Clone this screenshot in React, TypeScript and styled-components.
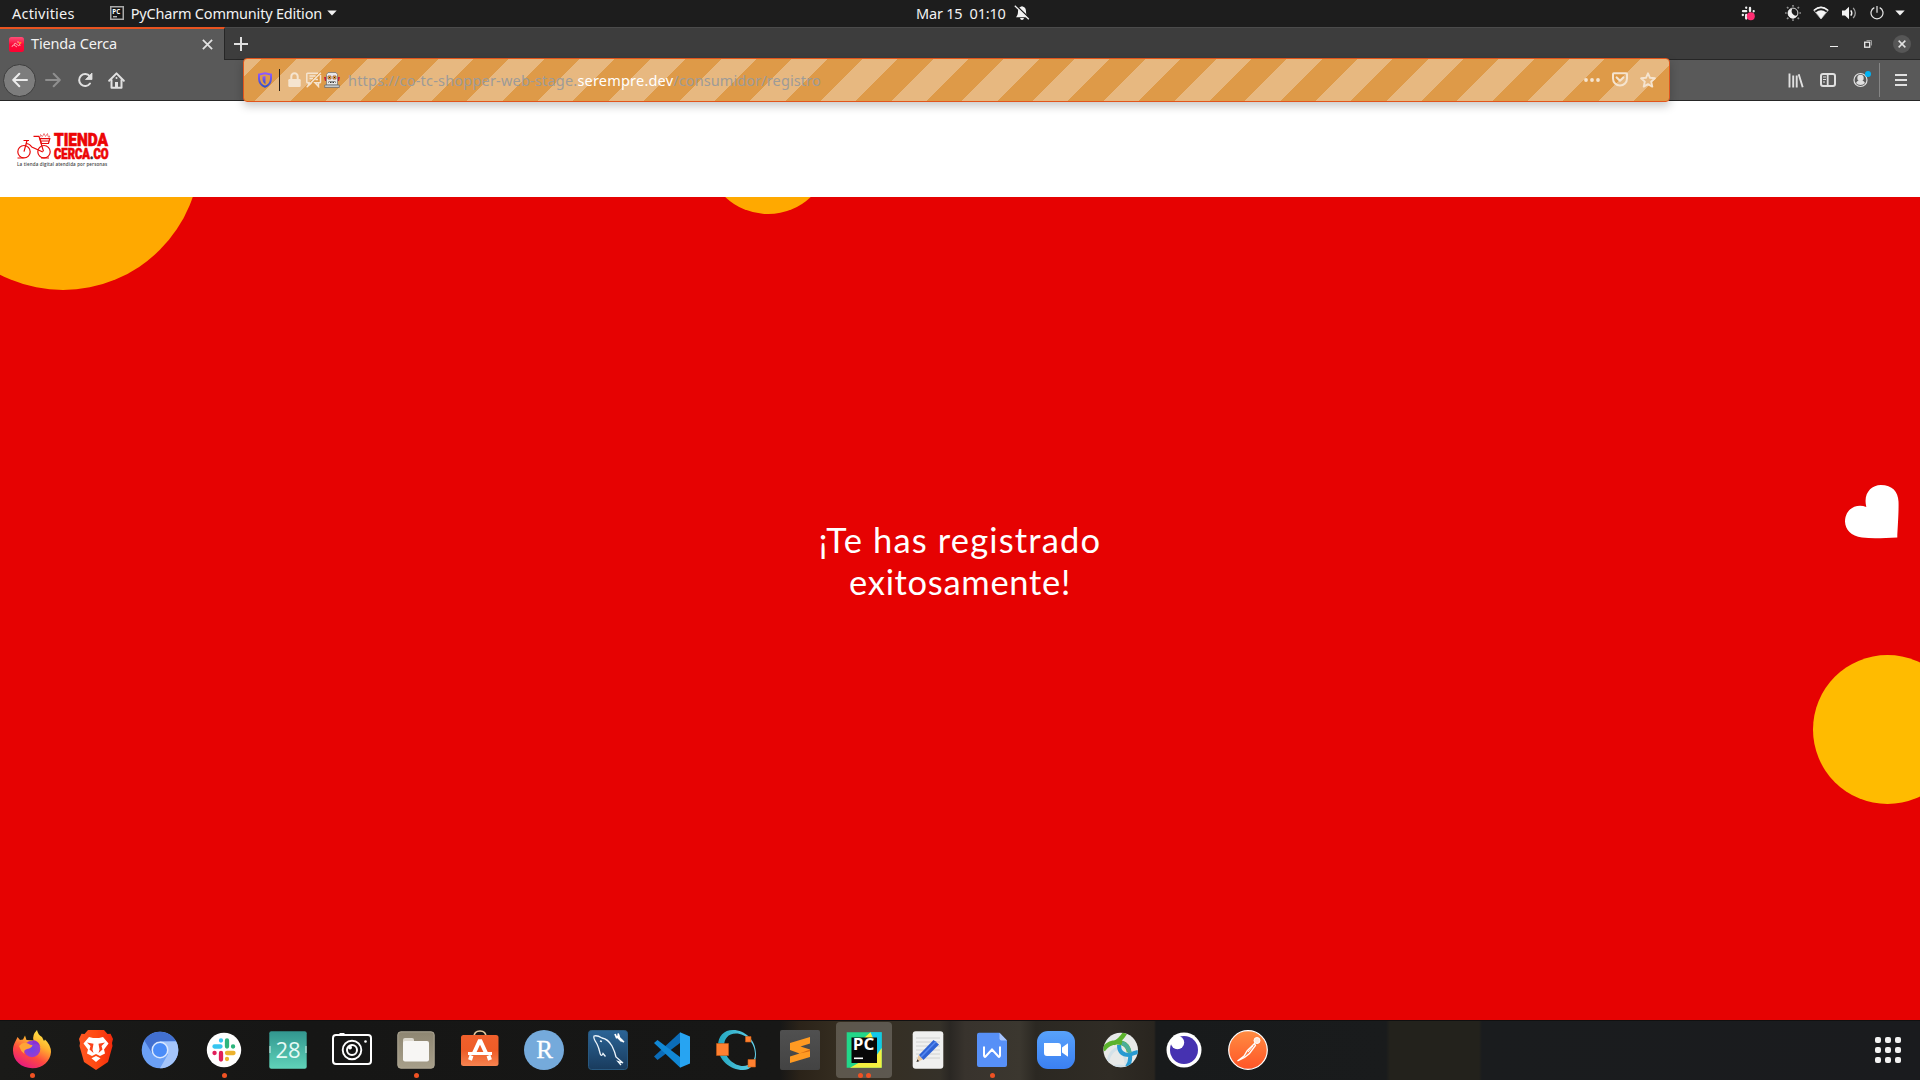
import React from "react";
import styled, { createGlobalStyle } from "styled-components";

const GlobalStyle = createGlobalStyle`
  * { box-sizing: border-box; }
  body { margin: 0; background: #e60202; overflow: hidden; }
  svg { display: block; flex: none; }
`;

const ui = `"Noto Sans", "Open Sans", sans-serif`;

const Desktop = styled.div`
  width: 1920px;
  height: 1080px;
  display: flex;
  flex-direction: column;
  overflow: hidden;
  font-family: ${ui};
`;

const Label = styled.span<{ $size?: number; $spacing?: number; $color?: string; $lift?: number }>`
  font-size: ${(p) => p.$size ?? 14.5}px;
  letter-spacing: ${(p) => p.$spacing ?? 0}px;
  color: ${(p) => p.$color ?? "#f2f2f2"};
  white-space: pre;
  line-height: 20px;
  margin-bottom: ${(p) => p.$lift ?? 1}px;
`;

const Gap = styled.div<{ $w: number }>`
  flex: none;
  width: ${(p) => p.$w}px;
`;

const Spacer = styled.div`
  flex: 1;
`;

const TopBar = styled.header`
  height: 27px;
  padding-bottom: 1px;
  flex: none;
  background: #1d1d1d;
  display: grid;
  grid-template-columns: 916px 1fr 180px;
`;

const BarGroup = styled.div`
  display: flex;
  align-items: center;
`;

const TabStrip = styled.div`
  height: 33px;
  flex: none;
  display: flex;
  align-items: center;
  background: #3d3d3d;
  border-top: 1px solid #4b4b4b;
  border-bottom: 1px solid #262626;
`;

const Tab = styled.div`
  width: 225px;
  height: 33px;
  margin-top: -1px;
  margin-bottom: -1px;
  padding: 0 11px 1px 9px;
  flex: none;
  display: flex;
  align-items: center;
  background: #595959;
  border-top: 2px solid #e95420;
  border-right: 1px solid #262626;
`;

const WindowClose = styled.div`
  width: 18px;
  height: 18px;
  border-radius: 50%;
  background: #565656;
  display: grid;
  place-items: center;
`;

const NavBar = styled.div`
  height: 41px;
  flex: none;
  display: flex;
  align-items: center;
  background: #595959;
  border-bottom: 1px solid #262626;
`;

const BackButton = styled.div`
  width: 33px;
  height: 33px;
  margin-left: 3px;
  border: 1px solid #3e3e3e;
  border-radius: 50%;
  background: #7d7d7d;
  display: grid;
  place-items: center;
`;

const UrlBar = styled.div`
  width: 1427px;
  height: 44px;
  margin: -3px 0 -2px;
  padding-left: 14px;
  flex: none;
  z-index: 2;
  display: flex;
  align-items: center;
  border: 1px solid #e2551c;
  border-radius: 4px;
  background: repeating-linear-gradient(-45deg, #de9a48 0 25px, #e7b880 25px 50px);
  box-shadow: 0 4px 10px rgba(0, 0, 0, 0.22);
`;

const Rule = styled.div<{ $h: number; $color: string }>`
  width: 1px;
  height: ${(p) => p.$h}px;
  background: ${(p) => p.$color};
`;

const SiteHeader = styled.div`
  height: 96px;
  flex: none;
  background: #fff;
  display: flex;
  padding: 29px 0 0 16px;
`;

const Page = styled.main`
  position: relative;
  height: 823px;
  flex: none;
  overflow: hidden;
  background: #e60202;
  display: flex;
  justify-content: center;
`;

const Bubble = styled.div<{ $x: number; $y: number; $r: number; $color: string }>`
  position: absolute;
  left: ${(p) => p.$x - p.$r}px;
  top: ${(p) => p.$y - p.$r}px;
  width: ${(p) => p.$r * 2}px;
  height: ${(p) => p.$r * 2}px;
  border-radius: 50%;
  background: ${(p) => p.$color};
`;

const HeartSpot = styled.div`
  position: absolute;
  left: 1844px;
  top: 288px;
`;

const Message = styled.h1`
  margin: 322px 0 0;
  font-family: Lato, "Noto Sans", sans-serif;
  font-weight: 400;
  font-size: 34.5px;
  line-height: 42px;
  color: #fff;
  text-align: center;
`;

const Line = styled.span<{ $spacing: number }>`
  display: block;
  letter-spacing: ${(p) => p.$spacing}px;
`;

const Dock = styled.footer`
  height: 60px;
  flex: none;
  display: flex;
  border-top: 1px solid #111;
  background: linear-gradient(90deg,
    #1a1a18 0, #161615 300px, #171716 780px, #2b2319 800px, #352d20 840px, #353129 940px,
    #2a2723 950px, #38332d 965px, #3b372f 1020px, #2b2822 1036px, #302c25 1110px, #29251f 1154px,
    #181a1b 1156px, #191b1c 1386px, #23221c 1390px, #23221c 1479px, #1a1c1e 1482px, #1a1b1e 1920px);
`;

const DockItem = styled.div<{ $active?: boolean }>`
  width: 56px;
  height: 56px;
  margin: 1px 4px 0;
  flex: none;
  display: flex;
  flex-direction: column;
  align-items: center;
  padding-top: 8px;
  border-radius: 4px;
  background: ${(p) => (p.$active ? "rgba(255,255,255,0.2)" : "transparent")};
`;

const Dots = styled.div`
  display: flex;
  gap: 3px;
  margin-top: 2.5px;
`;

const Dot = styled.i`
  width: 5px;
  height: 5px;
  border-radius: 50%;
  background: #f05223;
`;

const AppGrid = styled.div`
  display: grid;
  grid-template-columns: repeat(3, 6px);
  grid-auto-rows: 6px;
  gap: 4px;
  margin: 16px 19px 0 0;
`;

const GridDot = styled.i`
  border-radius: 2px;
  background: #f2f2f2;
`;

const LogoRow = styled.div`
  display: flex;
  flex-direction: column;
  align-items: flex-start;
`;

const LogoTop = styled.div`
  display: flex;
  height: 31px;
`;

const LogoWords = styled.div`
  padding-top: 2px;
  margin-left: 2px;
  font-family: Roboto, sans-serif;
  font-weight: 900;
  color: #ec0505;
  -webkit-text-stroke: 0.7px #ec0505;
`;

const LogoWord = styled.div<{ $size: number; $scale: number; $height: number }>`
  font-size: ${(p) => p.$size}px;
  line-height: ${(p) => p.$height}px;
  height: ${(p) => p.$height}px;
  width: max-content;
  white-space: nowrap;
  transform: scaleX(${(p) => p.$scale});
  transform-origin: 0 50%;
`;

const DarkDot = styled.span`
  color: #333;
  -webkit-text-stroke-color: #333;
`;

const LogoTag = styled.div`
  margin-left: 1px;
  font-family: "Open Sans", sans-serif;
  font-weight: 600;
  font-size: 4.5px;
  letter-spacing: 0.14px;
  line-height: 6px;
  white-space: nowrap;
  color: #444;
`;

const S = "#e0e0e0";

const PyCharmMini = () => (
  <svg width="14" height="14" viewBox="0 0 14 14">
    <rect width="14" height="14" fill="#aaa" />
    <rect x="1.5" y="1.5" width="11" height="11" fill="#161616" />
    <text x="2.3" y="7.6" fontSize="6.3" fontWeight="700" fontFamily="Open Sans, sans-serif" fill="#fff">PC</text>
    <path d="M3 10.8h4" stroke="#fff" />
  </svg>
);

const Caret = () => (
  <svg width="10" height="6" viewBox="0 0 10 6"><path d="M.3.5h9.4L5 5.5z" fill="#f2f2f2" /></svg>
);

const BellOff = () => (
  <svg width="16" height="16" viewBox="0 0 16 16">
    <path d="M8 1.2c-3 .5-4 2.6-4 5.3 0 2.7-.6 4.2-2 5.7h12c-1.4-1.5-2-3-2-5.7 0-2.7-1-4.8-4-5.3zM6 13h4q-.4 2-2 2t-2-2z" fill="#f2f2f2" />
    <path d="M1.8.2l14 13.5" stroke="#1d1d1d" strokeWidth="1.5" />
    <path d="M.8.8l14 13.5" stroke="#f2f2f2" strokeWidth="1.3" />
  </svg>
);

const SlackTray = () => (
  <svg width="15" height="15" viewBox="0 0 15 15">
    <g stroke="#f0f0f0" strokeWidth="2.3" strokeLinecap="round">
      <path d="M5.2 1.7v.1M5.2 5.2H2M9 2v3M12.7 5.2v.1M1.8 9h.1M5.2 9v3.5" />
    </g>
    <circle cx="9.8" cy="10.3" r="4" fill="#ff2d72" />
  </svg>
);

const NightLight = () => (
  <svg width="16" height="16" viewBox="0 0 16 16">
    <g stroke="#8f8f8f" strokeWidth="1.6"><path d="M8 0v1.7M8 14.3V16M0 8h1.7M14.3 8H16M2 2l1.4 1.4M12.6 12.6L14 14M14 2l-1.4 1.4M3.4 12.6L2 14" /></g>
    <circle cx="8" cy="8" r="4.9" fill="none" stroke="#f2f2f2" strokeWidth=".9" />
    <path d="M4.600 4.600A5 5 0 1 0 12.500 10.300 4.300 4.300 0 0 1 7.200 4.200q-1.300-.6-2.600.4z" fill="#f2f2f2" />
  </svg>
);

const Wifi = () => (
  <svg width="16" height="14" viewBox="0 0 16 14">
    <path d="M.7 4.3Q8-2 15.300 4.300L8 13z" fill="none" stroke="#aaa" strokeWidth=".9" />
    <path d="M2.800 6.200Q8 2.300 13.200 6.200L8 13z" fill="#f5f5f5" /><path d="M1 4.300Q8-1.500 15 4.300" fill="none" stroke="#f2f2f2" strokeWidth="1.5" />
  </svg>
);

const Volume = () => (
  <svg width="15" height="14" viewBox="0 0 15 14">
    <path d="M0 4.500h3L7 .7v12.600L3 9.500H0z" fill="#f2f2f2" />
    <path d="M8.800 4.300q2 2.700 0 5.400" fill="none" stroke="#f2f2f2" strokeWidth="1.4" />
    <path d="M11.200 1.800q4.200 5.200 0 10.400" fill="none" stroke="#a0a0a0" strokeWidth="1.3" />
  </svg>
);

const Power = () => (
  <svg width="14" height="14" viewBox="0 0 14 14" fill="none" stroke="#e8e8e8" strokeWidth="1.2">
    <path d="M4.300 1.600a6 6 0 1 0 5.400 0M7 0v6.700" />
  </svg>
);

const Favicon = () => (
  <svg width="15" height="15" viewBox="0 0 15 15">
    <defs><linearGradient id="fav" x2="0" y2="1"><stop stopColor="#ff4f78" /><stop offset=".5" stopColor="#fa0c3a" /><stop offset="1" stopColor="#ff0030" /></linearGradient></defs>
    <rect width="15" height="15" rx="2.5" fill="url(#fav)" />
    <path d="M3 10q0-2 2-2l3 2M5 8l1-2 4 3M8 5h2l1 4" stroke="#ffb0b5" fill="none" strokeWidth=".9" />
    <path d="M9.500 5h3l-.5 2h-2z" fill="#ff8a23" />
  </svg>
);

const Cross = ({ size = 10, w = 1.6 }: { size?: number; w?: number }) => (
  <svg width={size} height={size} viewBox="0 0 10 10" stroke="#e2e2e2" strokeWidth={w}><path d="M.8.8l8.4 8.4M9.2.8L.8 9.2" /></svg>
);

const Plus = () => (
  <svg width="14" height="14" viewBox="0 0 14 14" stroke={S} strokeWidth="2"><path d="M7 0v14M0 7h14" /></svg>
);

const Arrow = ({ dir, color }: { dir: "left" | "right"; color: string }) => (
  <svg width="16" height="16" viewBox="0 0 16 16" fill="none" stroke={color} strokeWidth="2" strokeLinecap="round" strokeLinejoin="round">
    {dir === "left" ? <path d="M15 8H1.500M7.300 1.800L1.200 8l6.100 6.200" /> : <path d="M1 8h13.500M8.700 1.800L14.800 8l-6.100 6.200" />}
  </svg>
);

const Reload = () => (
  <svg width="16" height="16" viewBox="0 0 16 16">
    <path d="M13 11.500A6 6 0 1 1 12.800 4.200" fill="none" stroke={S} strokeWidth="2" strokeLinecap="round" />
    <path d="M15 1v6.500H8.500z" fill={S} stroke={S} strokeWidth=".8" strokeLinejoin="round" />
  </svg>
);

const Home = () => (
  <svg width="17" height="17" viewBox="0 0 17 17" fill="none" stroke={S} strokeWidth="2" strokeLinejoin="round" strokeLinecap="round">
    <path d="M1.200 8.700l7.300-7.300 7.300 7.300" /><path d="M3.500 8v7.700h10V8" /><path d="M8.500 15v-5" strokeWidth="3" strokeLinecap="butt" /><path d="M8.500 6h.01" />
  </svg>
);

const Shield = () => (
  <svg width="14" height="16" viewBox="0 0 14 16">
    <defs><linearGradient id="sh" x2="0" y2="1"><stop stopColor="#9059ff" /><stop offset="1" stopColor="#3352c8" /></linearGradient></defs>
    <path d="M7 1.200L13 2.500v4.300Q12.700 12.700 7 14.800 1.300 12.700 1 6.800V2.500z" fill="none" stroke="url(#sh)" strokeWidth="2" />
    <path d="M7.500 4v8Q4.500 10.500 4.500 7V4.500z" fill="url(#sh)" />
  </svg>
);

const W = "#f5e4cf";
const Lock = () => (
  <svg width="13" height="16" viewBox="0 0 13 16">
    <path d="M3.300 8V4.500a3.200 3.200 0 0 1 6.400 0V8" fill="none" stroke={W} strokeWidth="2" /><rect x=".3" y="7" width="12.4" height="8" rx="1.2" fill={W} />
  </svg>
);

const ChatOff = () => (
  <svg width="16" height="16" viewBox="0 0 16 16" fill="none" stroke={W} strokeWidth="1.5">
    <path d="M12 1.200H1.500q-.7 0-.7.800v8q0 .8.700.8H3L2 14l3.500-3M14.500 3v7q0 .8-.8.800H9l3.500 3.700v-3.500M3.500 4h6M3.500 6.500H7M.8 15L14.800.8M9.500 7.500H12" />
  </svg>
);

const Robot = () => (
  <svg width="16" height="16" viewBox="0 0 16 16">
    <path d="M0 5h2v4H1zM14 5h2l-1 4h-1z" fill="#c81e35" />
    <path d="M4 .5h8l1.500 2V13h-11V2.500z" fill="#e9e9e9" stroke="#777" strokeWidth=".8" />
    <path d="M4 4h3v3H4zM9 4h3v3H9z" fill="#f6d84e" stroke="#943c25" strokeWidth=".7" />
    <path d="M5 5h1v1H5zM10 5h1v1h-1z" fill="#461010" />
    <path d="M4.500 9.500h7V11h-7z" fill="#333" /><path d="M5 10h1v1H5zM7.500 10h1v1h-1zM10 10h1v1h-1z" fill="#eee" />
    <path d="M.7 13h14.600v2.500H.7z" fill="#c3c9cd" stroke="#666" strokeWidth=".7" />
  </svg>
);

const Ellipsis = () => (
  <svg width="16" height="4" viewBox="0 0 16 4" fill={W}><circle cx="2" cy="2" r="1.9" /><circle cx="8" cy="2" r="1.9" /><circle cx="14" cy="2" r="1.9" /></svg>
);

const Pocket = () => (
  <svg width="16" height="15" viewBox="0 0 16 15" fill="none" stroke={W} strokeWidth="2" strokeLinecap="round" strokeLinejoin="round">
    <path d="M1.800 1.200h12.400q.8 0 .8.800v4.500a7 7 0 0 1-14 0V2q0-.8.800-.8z" /><path d="M4.700 5.500L8 8.700l3.300-3.200" strokeWidth="2.2" />
  </svg>
);

const Star = () => (
  <svg width="16" height="16" viewBox="0 0 16 16" fill="none" stroke={W} strokeWidth="1.9" strokeLinejoin="round">
    <path d="M8 1.300l2 4.500 4.900.5-3.700 3.300 1.100 5L8 12.100l-4.300 2.500 1.100-5L1.100 6.300 6 5.800z" />
  </svg>
);

const Library = () => (
  <svg width="16" height="15" viewBox="0 0 16 15" stroke={S} strokeWidth="1.9"><path d="M1.500.5v14M5.200 2.500v12M8.700 2.500v12M10.700 1.200l4 13" /></svg>
);

const Sidebar = () => (
  <svg width="16" height="14" viewBox="0 0 16 14" fill="none" stroke={S}>
    <rect x="1" y="1" width="14" height="12" rx="2" strokeWidth="2" /><path d="M7.700 1v12" strokeWidth="1.8" /><path d="M3 4h3M3 6.500h3M3 9h2" strokeWidth="1.2" />
  </svg>
);

const Account = () => (
  <svg width="19" height="18" viewBox="0 0 19 18">
    <circle cx="7.5" cy="9" r="6.5" fill="none" stroke={S} strokeWidth="1.2" />
    <circle cx="7.5" cy="6.9" r="3.2" fill={S} /><path d="M3 12q1-2.300 3-2.500h3q2 .2 3 2.500-1.500 2-4.500 2T3 12z" fill={S} />
    <circle cx="15" cy="3" r="3" fill="#00b3f4" />
  </svg>
);

const Menu = () => (
  <svg width="12" height="12" viewBox="0 0 12 12" stroke={S} strokeWidth="2"><path d="M0 1h12M0 6h12M0 11h12" /></svg>
);

const Bicycle = () => (
  <svg width="36" height="30" viewBox="0 0 36 30">
    <g fill="none" stroke="#e80a0a" strokeWidth="1.2">
      <circle cx="8" cy="21.7" r="6.2" /><circle cx="28" cy="21.7" r="6.2" />
      <path d="M8 21.700l3-11.200M7.500 10.500h5.500M10.300 13.500q3 0 5.500 3.500l11 5M17.500 6.300h5.500l4.500 15M1.500 28h6M25 28h8" />
      <path d="M24 8.700h9.800l-1.300 4.800h-7.200zM25 11h7.800" />
    </g>
    <path d="M25 7.500l-.5-3 2 2 1.500-3 1.500 3 2-3 .5 3 1.800-.5-1 2" fill="none" stroke="#ee6060" strokeWidth=".8" />
  </svg>
);

const SiteLogo = () => (
  <LogoRow>
    <LogoTop>
      <Bicycle />
      <LogoWords>
        <LogoWord $size={19} $scale={0.81} $height={15.5}>TIENDA</LogoWord>
        <LogoWord $size={14.5} $scale={0.775} $height={13}>CERCA<DarkDot>.</DarkDot>CO</LogoWord>
      </LogoWords>
    </LogoTop>
    <LogoTag>La tienda digital atendida por personas</LogoTag>
  </LogoRow>
);

const Heart = () => (
  <svg width="56" height="54" viewBox="0 0 56 54">
    <path d="M53.300 50.300C54.300 35 54.800 22 54.500 17 54 7 48.500.5 36.800.4 27 .5 19 9 22.300 22.300 12.500 18.500 1.200 24 1 37c.3 8 6 14.500 17 16 11 1.200 22 .5 35.300-.2z" fill="#fff" transform="translate(0 -.4)" />
  </svg>
);

const Icon = ({ children }: { children: React.ReactNode }) => (
  <svg width="40" height="40" viewBox="0 0 40 40">{children}</svg>
);

const Grad = ({ id, a, b, m }: { id: string; a: string; b: string; m?: string }) => (
  <linearGradient id={id} x2="0" y2="1"><stop stopColor={a} />{m && <stop offset=".5" stopColor={m} />}<stop offset="1" stopColor={b} /></linearGradient>
);

const Firefox = () => (
  <Icon>
    <defs>
      <linearGradient id="ff1" x1=".8" y1="0" x2=".25" y2="1"><stop stopColor="#fff14a" /><stop offset=".35" stopColor="#ffb02e" /><stop offset=".65" stopColor="#ff4a3f" /><stop offset="1" stopColor="#e31587" /></linearGradient>
      <radialGradient id="ff2"><stop stopColor="#6a45e8" /><stop offset="1" stopColor="#9a3ad0" /></radialGradient>
    </defs>
    <path d="M5.500 7L8 10l3-.5 2-4 1.500 4.500 7 .5Q20 5 25 0q1 5 5 7l2 4 1-1.500Q39 15 39 22c-.5 9-8 16-18.500 16.300C9 38 1 30.500 1 20.500 1 15 3 12.500 5.500 7z" fill="url(#ff1)" />
    <circle cx="20" cy="19" r="8.3" fill="url(#ff2)" />
    <path d="M7 16q4-5 9-2.500 3 2 4.500 1.500-.5 3-5.500 4-4 1-2.500 5-4-3-5.500-8z" fill="#ffa436" />
    <path d="M21 10q6 1 7.500 7-3-4-8-3z" fill="#8b2fd2" />
  </Icon>
);

const Brave = () => (
  <Icon>
    <defs><linearGradient id="br"><stop stopColor="#ff5722" /><stop offset=".5" stopColor="#ff4a12" /><stop offset="1" stopColor="#f42a0c" /></linearGradient></defs>
    <path d="M12 0h16l3.500 4 3-.3L37 9l-1 4 .5 3-4.500 16-12 8-12-8L3.500 16l.5-3-1-4 2.500-5.300 3 .3z" fill="url(#br)" />
    <path d="M13 7l4 1h6l4-1 5.500 6.500-4.500 6 1 4-5 2.500-4-2-4 2-5-2.500 1-4-4.500-6z" fill="#fff" />
    <path d="M11 12.500l6.500 1.300-1 5.700 1 3.500-4-3.500 1-3.500zM29 12.500l-6.500 1.300 1 5.700-1 3.500 4-3.500-1-3.500z" fill="#fa431b" />
    <path d="M20 26l4.500 2.200L20 32l-4.500-3.800z" fill="#fff" />
  </Icon>
);

const Chromium = () => (
  <Icon>
    <circle cx="20" cy="20" r="18.3" fill="#6ba0f5" />
    <path d="M4.300 10.500A18.300 18.300 0 0 1 35.800 11L20 11.500 12 23z" fill="#4270d0" />
    <path d="M20 11.500h16.200A18.300 18.300 0 0 1 20 38.300l8-14z" fill="#a4c5fb" />
    <circle cx="20" cy="20" r="8.5" fill="#dbe8ff" /><circle cx="20" cy="20" r="7" fill="#4a8cf8" />
  </Icon>
);

const Slack = () => (
  <Icon>
    <circle cx="20" cy="20" r="17.2" fill="#fff" />
    <g strokeWidth="4.3" strokeLinecap="round">
      <path d="M10.500 16.500h6M17 10.500v.1" stroke="#36c5f0" /><path d="M23 10.500v6M29 16.500h.1" stroke="#2eb67d" />
      <path d="M23 23h6.500M23 29v.1" stroke="#ecb22e" /><path d="M17 23v6.500M10.500 23h.1" stroke="#e01e5a" />
    </g>
  </Icon>
);

const Calendar = () => (
  <Icon>
    <defs><Grad id="cal" a="#32968f" b="#60d3b9" /></defs>
    <rect x="1.3" y="1.3" width="37.4" height="37.4" rx="2" fill="url(#cal)" />
    <path d="M2 16v7M38 16v7" stroke="#d5f0ec" />
    <text x="20" y="28.3" textAnchor="middle" fontFamily="Open Sans, sans-serif" fontSize="22" fill="#e6faf5">28</text>
  </Icon>
);

const Camera = () => (
  <Icon>
    <rect x="1" y="5" width="38" height="29" rx="3" fill="none" stroke="#fff" strokeWidth="2" />
    <path d="M7.500 3h5v3h-5z" fill="#fff" /><circle cx="33.5" cy="11.5" r="1.3" fill="#fff" />
    <circle cx="20" cy="20" r="9.3" fill="none" stroke="#fff" strokeWidth="1.9" />
    <circle cx="20" cy="20" r="5" fill="none" stroke="#fff" strokeWidth="2" /><circle cx="21" cy="19" r="2" fill="#111" /><circle cx="18" cy="17.5" r="2" fill="#fff" />
  </Icon>
);

const Files = () => (
  <Icon>
    <defs><Grad id="fl" a="#8e8672" b="#a79f8a" /></defs>
    <rect x="1.8" y="1.8" width="36.4" height="36.4" rx="3" fill="url(#fl)" stroke="#b0a996" />
    <path d="M7 10q0-2 2-2h7q2 0 2 2v6H7z" fill="#dedad0" /><rect x="7" y="11" width="26" height="20.5" rx="2" fill="#f7f6f4" />
  </Icon>
);

const Software = () => (
  <Icon>
    <defs><Grad id="sw" a="#f0602c" m="#ee5c27" b="#f78350" /></defs>
    <path d="M14 7q0-6 6-6t6 6" fill="none" stroke="#e6c99e" strokeWidth="1.6" />
    <rect x="1" y="5" width="37.5" height="31" rx="2.5" fill="url(#sw)" />
    <path d="M14 23L20 10 26 23" fill="none" stroke="#fff" strokeWidth="4" strokeLinejoin="bevel" />
    <path d="M8 22h24v3H8z" fill="#fff" /><path d="M11.500 25.500l-1.500 4.500M28.500 25.500l1.500 4.500" stroke="#fff" strokeWidth="4" />
  </Icon>
);

const RStudio = () => (
  <Icon>
    <circle cx="20" cy="20" r="20" fill="#75aadb" />
    <text x="20.5" y="28" textAnchor="middle" fontFamily="Liberation Serif, serif" fontSize="25" fill="#fff" stroke="#fff" strokeWidth=".3">R</text>
  </Icon>
);

const Workbench = () => (
  <Icon>
    <defs><Grad id="wb" a="#2b6496" b="#193b5d" /></defs>
    <rect x=".5" y=".5" width="39" height="39" rx="3" fill="url(#wb)" stroke="#28587f" />
    <path d="M17.500 26.500l-2.500-3q-2 4-3-.5Q11 18 9 14 5 8 6 6q3-1 8 2 6 1 10 8 3 6 4 11l7 6-5-1.500 3 3.500M12 11l2 .5" fill="none" stroke="#edf5fb" strokeWidth="1.3" />
    <path d="M29 6l5 5" stroke="#fff" strokeWidth="2.6" /><path d="M27 4l1.500 3.500L31 6l-1-2.500M33 10l3 2M35 8" fill="none" stroke="#fff" strokeWidth="1.8" />
  </Icon>
);

const VSCode = () => (
  <Icon>
    <path d="M2 26.500L5.500 30 28 13V2.500z" fill="#0b6cb8" />
    <path d="M2 13l3.500-3L28 27v10.500z" fill="#1188d5" />
    <path d="M28 2.300l10 4.200v27l-10 4.200z" fill="#27a4f2" />
  </Icon>
);

const Octave = () => (
  <Icon>
    <defs><linearGradient id="oc"><stop stopColor="#22a6bf" /><stop offset="1" stopColor="#63d2ec" /></linearGradient></defs>
    <path fillRule="evenodd" d="M17 0C29 0 40 10 40 24c0 10-5 16-13 16C14 40 2 30 2 16 2 6 8 0 17 0zm3 3.500C12 3.500 8 9 8 16c0 11 10 20 19 20 7 0 12-5 12-12C39 13 30 3.500 20 3.500z" fill="url(#oc)" />
    <g fill="#ff8030" stroke="#c95a12" strokeWidth=".6"><path d="M.5 13.500h12v12H.5zM29.500 6.500h5.500v5.500h-5.500zM32 29.500h7.500v7.500H32z" /></g>
  </Icon>
);

const Sublime = () => (
  <Icon>
    <defs><Grad id="sb" a="#505050" b="#434343" /></defs>
    <rect width="40" height="40" rx="2" fill="url(#sb)" />
    <path d="M10 13L30 7v6.500l-9.500 3L30 19.500V27l-20 6v-6.500l9.500-3L10 20z" fill="#ff9a22" />
    <path d="M19.500 23.500L30 19.500v1.800z" fill="#d96b10" />
  </Icon>
);

const PyCharm = () => (
  <Icon>
    <path d="M2.700 2.300h35v35.400h-35z" fill="#21d789" /><path d="M22 8l4-5.700h11.700v20L31 28z" fill="#12c8ea" />
    <path d="M20 8l6.500-5.700L29 8zM37.700 18v19.700H6L18 31l14-5z" fill="#f5ef3f" />
    <rect x="7.5" y="7.5" width="25.5" height="25.5" fill="#080808" />
    <text x="8.8" y="20" fontFamily="Open Sans, sans-serif" fontWeight="700" fontSize="15.5" fill="#fff" textLength="21.5" lengthAdjust="spacingAndGlyphs">PC</text>
    <path d="M10 28.300h9" stroke="#fff" strokeWidth="1.6" />
  </Icon>
);

const Editor = () => (
  <Icon>
    <rect x="4.7" y="1.3" width="30.6" height="37.4" rx="3" fill="#f0f0ef" />
    <path d="M8 8h24M8 12h24M8 16h24M8 20h24M8 24h24M8 28h24" stroke="#c9c9c9" strokeWidth=".8" />
    <path d="M8.500 32l2-7 4.500 4.500z" fill="#eac9a1" /><path d="M8.500 32l.8-2.800 2 2z" fill="#333" />
    <path d="M11 25L25.500 10l5.500 4.500-15.500 15.500z" fill="#2f62d4" /><path d="M13 27l15-15.500" stroke="#5487f0" strokeWidth="1.7" />
  </Icon>
);

const Writer = () => (
  <Icon>
    <path d="M7 2.700h20.500L35 10.500V35q0 2-2 2H7q-2 0-2-2V4.700q0-2 2-2z" fill="#5790f7" /><path d="M27.500 2.700v5.800q0 2 2 2H35z" fill="#a9c6ff" />
    <path d="M12 16.500v9q.3 2.500 2 .5L20 19.500l6 6.500q1.700 2 2-.5v-9" fill="none" stroke="#fff" strokeWidth="2" />
  </Icon>
);

const Zoom = () => (
  <Icon>
    <defs><Grad id="zm" a="#58a2fb" b="#3b80f2" /></defs>
    <rect x="1" y="1" width="38" height="38" rx="11" fill="url(#zm)" />
    <path d="M8 13h14q3 0 3 3v10H11q-3 0-3-3zM26 17.500l6-4.300v13.600l-6-4.300z" fill="#fff" />
  </Icon>
);

const AnyConnect = () => (
  <Icon>
    <defs><clipPath id="ac"><circle cx="20.7" cy="20" r="17.3" /></clipPath></defs>
    <g clipPath="url(#ac)">
      <path d="M0 0h40v40H0z" fill="#e7e9e8" />
      <path d="M8 31q2-11 11-13 8 9 7 18M10 38q8-4 20 0" fill="none" stroke="#d3e1e8" strokeWidth="3" />
      <path d="M3 20Q10 10 22 13q6 2 7 9M14 13Q20 11 25 3" fill="none" stroke="#5bb32c" strokeWidth="4.5" />
      <path d="M19 15q0 10 10 10 5-2 9-3M30 24q1 8-3 13" fill="none" stroke="#279ad2" strokeWidth="4" /><path d="M22 13q6 2 8 10" fill="none" stroke="#4bae9a" strokeWidth="4" />
    </g>
  </Icon>
);

const Insomnia = () => (
  <Icon>
    <circle cx="20" cy="20" r="17.5" fill="#fff" /><circle cx="20" cy="20" r="14" fill="#4632b1" /><circle cx="13.5" cy="12.5" r="6.7" fill="#fff" />
  </Icon>
);

const Postman = () => (
  <Icon>
    <defs><Grad id="pm" a="#ff8c42" b="#ff5527" /></defs>
    <circle cx="20" cy="20" r="19.3" fill="url(#pm)" stroke="#fff" strokeWidth="1.2" />
    <circle cx="29" cy="10.5" r="3" fill="#ffe8db" stroke="#fff" />
    <path d="M26.500 13.500L19 21l-3 5-6.500 5 7-3.500 5-4 6-8z" fill="#ff7a45" stroke="#fff" strokeWidth="1.3" /><path d="M25 16l-5 6" stroke="#fff" />
  </Icon>
);

const apps: { name: string; icon: React.FC; dots?: number; active?: boolean }[] = [
  { name: "firefox", icon: Firefox, dots: 1 },
  { name: "brave", icon: Brave },
  { name: "chromium", icon: Chromium },
  { name: "slack", icon: Slack, dots: 1 },
  { name: "calendar", icon: Calendar },
  { name: "camera", icon: Camera },
  { name: "files", icon: Files, dots: 1 },
  { name: "software", icon: Software },
  { name: "rstudio", icon: RStudio },
  { name: "workbench", icon: Workbench },
  { name: "vscode", icon: VSCode },
  { name: "octave", icon: Octave },
  { name: "sublime", icon: Sublime },
  { name: "pycharm", icon: PyCharm, dots: 2, active: true },
  { name: "editor", icon: Editor },
  { name: "writer", icon: Writer, dots: 1 },
  { name: "zoom", icon: Zoom },
  { name: "anyconnect", icon: AnyConnect },
  { name: "insomnia", icon: Insomnia },
  { name: "postman", icon: Postman },
];

export default function App() {
  return (
    <Desktop>
      <GlobalStyle />
      <TopBar>
        <BarGroup>
          <Gap $w={12} />
          <Label $spacing={0.22} $lift={0}>Activities</Label>
          <Spacer />
          <PyCharmMini />
          <Gap $w={7} />
          <Label $spacing={-0.2} $lift={0}>PyCharm Community Edition</Label>
          <Gap $w={5} />
          <Caret />
          <Gap $w={579} />
        </BarGroup>
        <BarGroup>
          <Label $spacing={-0.2} $lift={1}>Mar 15  01:10</Label>
          <Gap $w={8} />
          <BellOff />
        </BarGroup>
        <BarGroup>
          <Gap $w={1} />
          <SlackTray />
          <Gap $w={29} />
          <NightLight />
          <Gap $w={12} />
          <Wifi />
          <Gap $w={13} />
          <Volume />
          <Gap $w={13} />
          <Power />
          <Gap $w={11} />
          <Caret />
        </BarGroup>
      </TopBar>
      <TabStrip>
        <Tab>
          <Favicon />
          <Gap $w={7} />
          <Label $spacing={-0.15} $lift={2}>Tienda Cerca</Label>
          <Spacer />
          <Cross size={11} />
        </Tab>
        <Gap $w={9} />
        <Plus />
        <Spacer />
        <svg width="8" height="8" viewBox="0 0 8 8"><path d="M0 6.500h8" stroke="#eee" /></svg>
        <Gap $w={26} />
        <svg width="8" height="8" viewBox="0 0 8 8" fill="none"><path d="M2.500.5h5v5" stroke="#999" /><rect x=".7" y="2.2" width="5" height="5" stroke="#eee" strokeWidth="1.3" /></svg>
        <Gap $w={21} />
        <WindowClose><Cross size={8} w={1.9} /></WindowClose>
        <Gap $w={9} />
      </TabStrip>
      <NavBar>
        <BackButton><Arrow dir="left" color="#ececec" /></BackButton>
        <Gap $w={9} />
        <Arrow dir="right" color="#8f8f8f" />
        <Gap $w={16} />
        <Reload />
        <Gap $w={15} />
        <Home />
        <Spacer />
        <UrlBar>
          <Shield />
          <Gap $w={7} />
          <Rule $h={22} $color="#2a2118" />
          <Gap $w={8} />
          <Lock />
          <Gap $w={5} />
          <ChatOff />
          <Gap $w={2} />
          <Robot />
          <Gap $w={8} />
          <Label $spacing={0.2} $lift={0} $color="#9d9b98">https://co-tc-shopper-web-stage.</Label>
          <Label $spacing={0.2} $lift={0} $color="#fff">serempre.dev</Label>
          <Label $spacing={0.1} $lift={0} $color="#9d9b98">/consumidor/registro</Label>
          <Spacer />
          <Ellipsis />
          <Gap $w={12} />
          <Pocket />
          <Gap $w={12} />
          <Star />
          <Gap $w={13} />
        </UrlBar>
        <Gap $w={118} />
        <Library />
        <Gap $w={16} />
        <Sidebar />
        <Gap $w={17} />
        <Account />
        <Gap $w={7} />
        <Rule $h={34} $color="#858585" />
        <Gap $w={15} />
        <Menu />
        <Gap $w={13} />
      </NavBar>
      <SiteHeader><SiteLogo /></SiteHeader>
      <Page>
        <Bubble $x={62.5} $y={-44} $r={137} $color="#ffa900" />
        <Bubble $x={768} $y={-45} $r={61.7} $color="#ffa900" />
        <Bubble $x={1887.5} $y={532.7} $r={74.7} $color="#ffbb00" />
        <HeartSpot><Heart /></HeartSpot>
        <Message>
          <Line $spacing={1.15}>¡Te has registrado</Line>
          <Line $spacing={0.7}>exitosamente!</Line>
        </Message>
      </Page>
      <Dock>
        {apps.map(({ name, icon: AppIcon, dots, active }) => (
          <DockItem key={name} $active={active}>
            <AppIcon />
            <Dots>{Array.from({ length: dots ?? 0 }, (_, i) => <Dot key={i} />)}</Dots>
          </DockItem>
        ))}
        <Spacer />
        <AppGrid>{Array.from({ length: 9 }, (_, i) => <GridDot key={i} />)}</AppGrid>
      </Dock>
    </Desktop>
  );
}
